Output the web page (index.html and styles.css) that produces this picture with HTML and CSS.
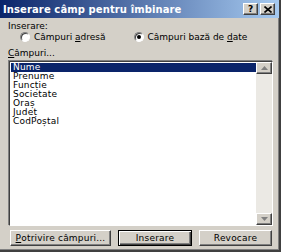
FILE: index.html
```html
<!DOCTYPE html>
<html lang="ro">
<head>
<meta charset="utf-8">
<link rel="stylesheet" href="styles.css">
</head>
<body>
<div class="window">
  <div class="titlebar">
    <span class="title">Inserare câmp pentru îmbinare</span>
    <div class="tbtns">
      <span class="tbtn help">?</span>
      <span class="tbtn close"><svg width="8" height="7" viewBox="0 0 8 7"><path d="M0.5 0.5 L7.5 6.5 M7.5 0.5 L0.5 6.5" stroke="#000" stroke-width="1.6"/></svg></span>
    </div>
  </div>
  <div class="body">
    <div class="label">Inserare:</div>
    <div class="radios">
      <div class="radio"><span class="rdot"></span><span>Câmpuri <u>a</u>dresă</span></div>
      <div class="radio"><span class="rdot checked"></span><span>Câmpuri bază de <u>d</u>ate</span></div>
    </div>
    <div class="label fields"><u>C</u>âmpuri...</div>
    <div class="listbox">
      <ul class="items">
        <li class="sel">Nume</li>
        <li>Prenume</li>
        <li>Funcție</li>
        <li>Societate</li>
        <li>Oraș</li>
        <li>Județ</li>
        <li>CodPoștal</li>
      </ul>
      <div class="scrollbar">
        <div class="sbtn"><svg width="7" height="4" viewBox="0 0 7 4"><path d="M0 4 L3.5 0 L7 4 Z" fill="#808080"/></svg></div>
        <div class="track"></div>
        <div class="sbtn"><svg width="7" height="4" viewBox="0 0 7 4"><path d="M0 0 L3.5 4 L7 0 Z" fill="#808080"/></svg></div>
      </div>
    </div>
    <div class="buttons">
      <div class="btn b1"><u>P</u>otrivire câmpuri...</div>
      <div class="btn b2 default">Inserare</div>
      <div class="btn b3">Revocare</div>
    </div>
  </div>
</div>
</body>
</html>
```
FILE: styles.css
```css
* { box-sizing: border-box; }
html, body { margin: 0; padding: 0; }
body {
  width: 281px;
  height: 252px;
  overflow: hidden;
  background: #d4d0c8;
  font-family: "DejaVu Sans", "Liberation Sans", sans-serif;
  font-size: 9px;
  color: #000;
}
.window {
  width: 281px;
  height: 252px;
  background: #d4d0c8;
  border-right: 2px solid #404040;
  border-bottom: 2px solid #404040;
  box-shadow: inset -1px -1px 0 #808080;
  display: flex;
  flex-direction: column;
}
.titlebar {
  height: 18px;
  flex: none;
  background: linear-gradient(to right, #0a246a, #a6caf0);
  display: flex;
  align-items: center;
  justify-content: space-between;
  padding: 0 4px 0 3px;
}
.title {
  color: #fff;
  font-weight: bold;
  font-size: 10px;
  letter-spacing: 0.1px;
}
.tbtns { display: flex; gap: 2px; }
.tbtn {
  width: 15px;
  height: 12px;
  background: #d4d0c8;
  border-top: 1px solid #fff;
  border-left: 1px solid #fff;
  border-right: 1px solid #404040;
  border-bottom: 1px solid #404040;
  box-shadow: inset -1px -1px 0 #808080;
  display: flex;
  align-items: center;
  justify-content: center;
  font-weight: bold;
  font-size: 9px;
  line-height: 1;
}
.body {
  flex: 1;
  padding: 3px 6px 3px 8px;
  display: flex;
  flex-direction: column;
}
.label { height: 10px; line-height: 10px; }
.radios {
  display: flex;
  padding-left: 12px;
  height: 12px;
  align-items: center;
}
.radio { display: flex; align-items: center; gap: 4px; }
.radio + .radio { margin-left: 28px; }
.rdot {
  width: 10px;
  height: 10px;
  border-radius: 50%;
  background: #fff;
  border: 1px solid;
  border-color: #808080 #fff #fff #808080;
  box-shadow: inset 1px 1px 0 #404040;
  position: relative;
}
.rdot.checked::after {
  content: "";
  position: absolute;
  left: 2px;
  top: 2px;
  width: 4px;
  height: 4px;
  border-radius: 50%;
  background: #000;
}
.fields { margin-top: 5px; }
.listbox {
  flex: none;
  margin: 3px 0 0 1px;
  height: 165px;
  background: #fff;
  border-top: 1px solid #404040;
  border-left: 1px solid #404040;
  border-right: 1px solid #fff;
  border-bottom: 1px solid #fff;
  box-shadow: -1px -1px 0 #808080;
  display: flex;
}
.items {
  flex: 1;
  list-style: none;
  margin: 0;
  padding: 1px 0 0 1px;
  font-size: 9px;
}
.items li {
  height: 9px;
  line-height: 9px;
  padding-left: 2px;
  letter-spacing: 0.2px;
}
.items li.sel {
  background: #0a246a;
  color: #fff;
}
.scrollbar {
  width: 16px;
  display: flex;
  flex-direction: column;
  background: #ebe9e4;
}
.track { flex: 1; }
.sbtn {
  height: 12px;
  background: #d4d0c8;
  border-top: 1px solid #fff;
  border-left: 1px solid #fff;
  border-right: 1px solid #404040;
  border-bottom: 1px solid #404040;
  box-shadow: inset -1px -1px 0 #808080;
  display: flex;
  align-items: center;
  justify-content: center;
}
.buttons {
  display: flex;
  margin-top: 4px;
  padding-left: 2px;
  gap: 7px;
}
.btn {
  height: 16px;
  display: flex;
  align-items: center;
  justify-content: center;
  background: #d4d0c8;
  border-top: 1px solid #fff;
  border-left: 1px solid #fff;
  border-right: 1px solid #404040;
  border-bottom: 1px solid #404040;
  box-shadow: inset -1px -1px 0 #808080;
  letter-spacing: 0.2px;
}
.btn.default {
  border: 1px solid #000;
  box-shadow: inset 1px 1px 0 #fff, inset -1px -1px 0 #404040, inset -2px -2px 0 #808080;
}
.b1 { width: 101px; }
.b2 { width: 74px; }
.b3 { width: 73px; }
```
